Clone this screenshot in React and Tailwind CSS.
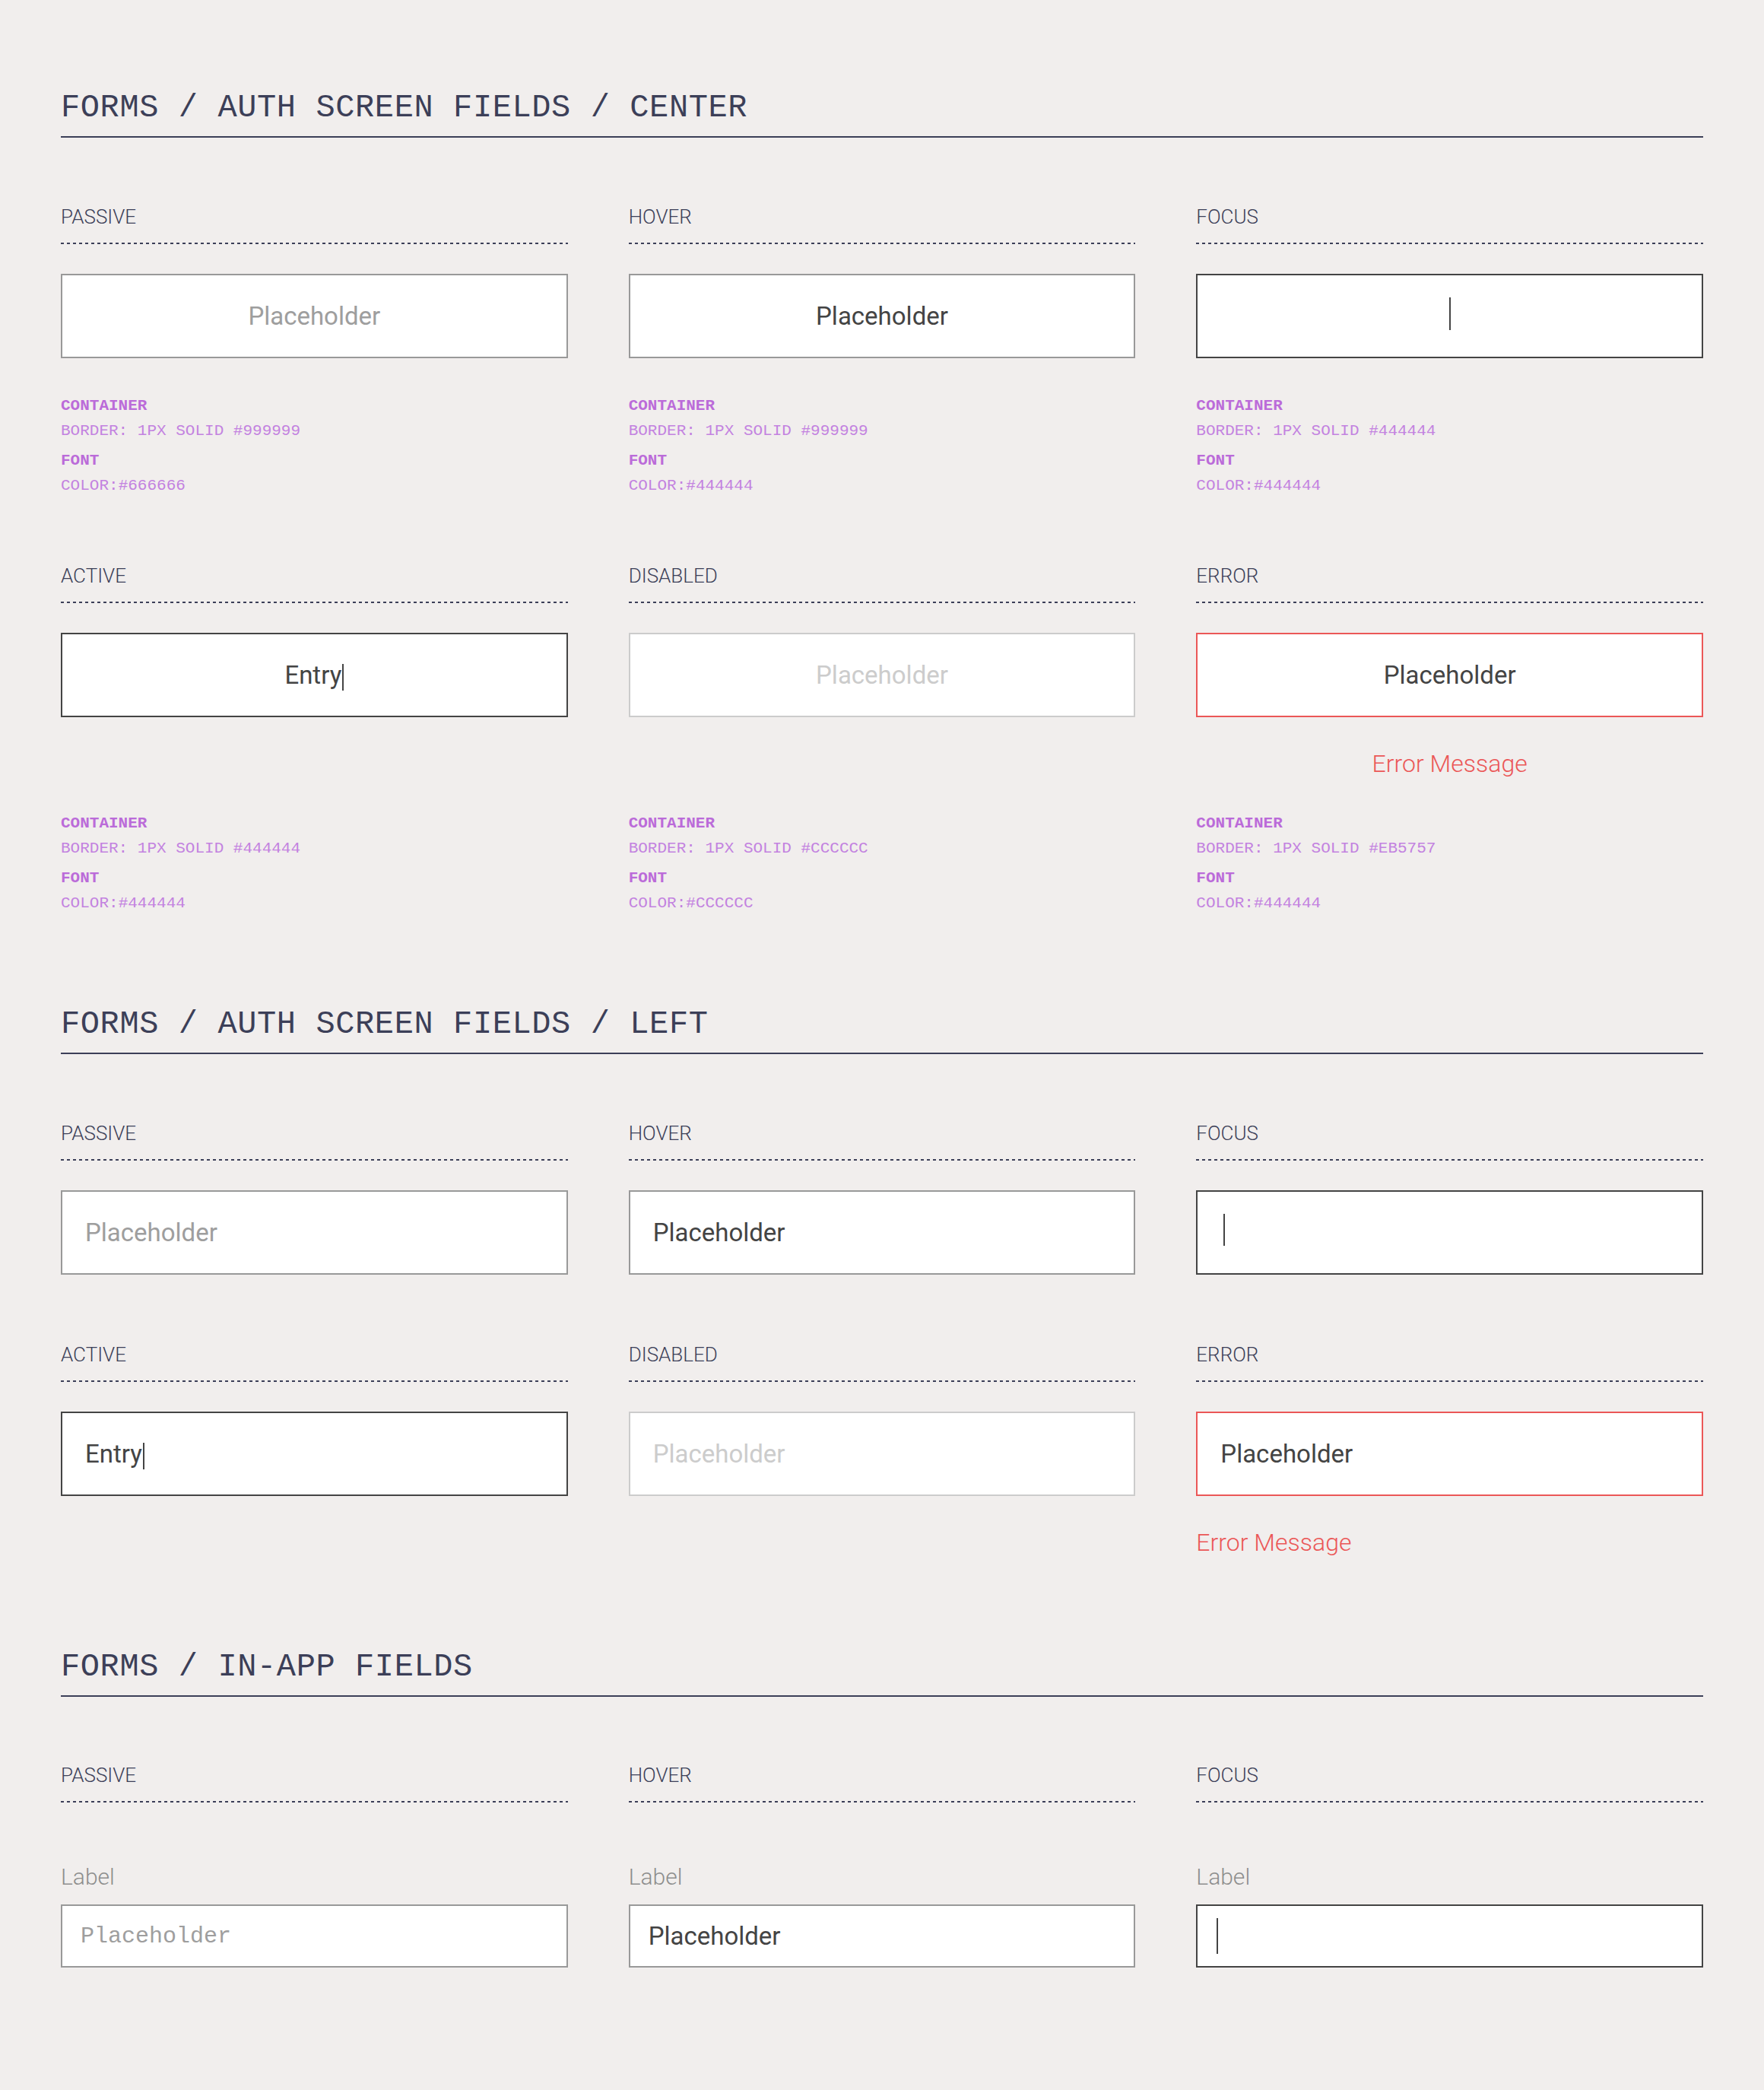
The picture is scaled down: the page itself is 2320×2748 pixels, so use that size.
const MONO = "font-['Liberation_Mono',monospace]";

const variants = {
  passive: { box: 'border-[#999999]', text: 'text-[#9e9e9e]', content: 'Placeholder' },
  hover: { box: 'border-[#999999]', text: 'text-[#444444]', content: 'Placeholder' },
  focus: { box: 'border-[#444444]', cursor: true },
  active: { box: 'border-[#444444]', text: 'text-[#444444]', content: 'Entry', cursor: true },
  disabled: { box: 'border-[#cccccc]', text: 'text-[#cccccc]', content: 'Placeholder' },
  error: { box: 'border-[#eb5757]', text: 'text-[#444444]', content: 'Placeholder' },
};

function SectionTitle({ children }) {
  return (
    <h2
      className={`${MONO} text-[42px] leading-[43px] tracking-[0.6px] text-[#3c3f58] pt-[3px] pb-[15px] border-b-2 border-[#3c3f58]`}
    >
      {children}
    </h2>
  );
}

function StateHeader({ label }) {
  return (
    <>
      <p className="text-[26px] leading-[26px] font-light text-[#3c3f58]">{label}</p>
      <div className="mt-[21px] h-[2px] w-full bg-[linear-gradient(to_right,#3c3f58_50%,transparent_50%)] bg-[length:8px_2px] bg-repeat-x" />
    </>
  );
}

function Cursor({ h }) {
  return <span className={`inline-block w-[2px] bg-[#444444] ${h}`} />;
}

function Specs({ border, font }) {
  return (
    <div className={`${MONO} mt-auto pt-[46px] text-[21px] leading-[33px]`}>
      <p className="font-bold text-[#bb6bd9]">CONTAINER</p>
      <p className="text-[#c382e0]">BORDER: 1PX SOLID {border}</p>
      <p className="mt-[6px] font-bold text-[#bb6bd9]">FONT</p>
      <p className="text-[#c382e0]">COLOR:{font}</p>
    </div>
  );
}

function AuthField({ state, align }) {
  const v = variants[state];
  const center = align === 'center';
  return (
    <div
      className={`mt-[39px] h-[111px] bg-white border-2 ${v.box} flex items-center ${
        center ? 'justify-center' : 'pl-[30px]'
      }`}
    >
      {state === 'focus' ? (
        <span className={center ? '' : 'pl-[4px]'}>
          <Cursor h={center ? 'h-[43px]' : 'h-[42px]'} />
        </span>
      ) : (
        <span className={`flex items-center text-[33px] leading-[33px] ${v.text}`}>
          {v.content}
          {v.cursor && (
            <span className="ml-[1px] mt-[6px] flex">
              <Cursor h="h-[35px]" />
            </span>
          )}
        </span>
      )}
    </div>
  );
}

function AuthCell({ label, state, align, specs }) {
  return (
    <div className="flex flex-col">
      <StateHeader label={label} />
      <AuthField state={state} align={align} />
      {state === 'error' && (
        <p
          className={`mt-[45px] text-[32px] leading-[32px] font-light text-[#eb5757] ${
            align === 'center' ? 'text-center' : ''
          }`}
        >
          Error Message
        </p>
      )}
      {specs && <Specs border={specs[0]} font={specs[1]} />}
    </div>
  );
}

const centerCells = [
  { label: 'PASSIVE', state: 'passive', specs: ['#999999', '#666666'] },
  { label: 'HOVER', state: 'hover', specs: ['#999999', '#444444'] },
  { label: 'FOCUS', state: 'focus', specs: ['#444444', '#444444'] },
  { label: 'ACTIVE', state: 'active', specs: ['#444444', '#444444'] },
  { label: 'DISABLED', state: 'disabled', specs: ['#CCCCCC', '#CCCCCC'] },
  { label: 'ERROR', state: 'error', specs: ['#EB5757', '#444444'] },
];

const leftCells = [
  { label: 'PASSIVE', state: 'passive' },
  { label: 'HOVER', state: 'hover' },
  { label: 'FOCUS', state: 'focus' },
  { label: 'ACTIVE', state: 'active' },
  { label: 'DISABLED', state: 'disabled' },
  { label: 'ERROR', state: 'error' },
];

function InAppCell({ label, state }) {
  const box = state === 'focus' ? 'border-[#444444]' : 'border-[#999999]';
  return (
    <div className="flex flex-col">
      <StateHeader label={label} />
      <p className="mt-[83px] text-[30px] leading-[30px] font-light text-[#8e8e8e]">Label</p>
      <div className={`mt-[21px] h-[83px] bg-white border-2 ${box} flex items-center pl-[24px]`}>
        {state === 'passive' && (
          <span className={`${MONO} text-[30px] leading-[30px] text-[#9e9e9e]`}>Placeholder</span>
        )}
        {state === 'hover' && (
          <span className="text-[33px] leading-[33px] text-[#444444]">Placeholder</span>
        )}
        {state === 'focus' && (
          <span className="pl-[1px] flex">
            <Cursor h="h-[47px]" />
          </span>
        )}
      </div>
    </div>
  );
}

export default function App() {
  return (
    <div className="min-h-[2748px] w-full bg-[#f1eeed] px-[80px] pt-[118px] font-['Roboto',sans-serif]">
      <section>
        <SectionTitle>FORMS / AUTH SCREEN FIELDS / CENTER</SectionTitle>
        <div className="mt-[91px] grid grid-cols-3 gap-x-[80px] gap-y-[89px]">
          {centerCells.map((c) => (
            <AuthCell key={c.label} {...c} align="center" />
          ))}
        </div>
      </section>

      <section className="mt-[119px]">
        <SectionTitle>FORMS / AUTH SCREEN FIELDS / LEFT</SectionTitle>
        <div className="mt-[91px] grid grid-cols-3 gap-x-[80px] gap-y-[92px]">
          {leftCells.map((c) => (
            <AuthCell key={c.label} {...c} align="left" />
          ))}
        </div>
      </section>

      <section className="mt-[124px]">
        <SectionTitle>FORMS / IN-APP FIELDS</SectionTitle>
        <div className="mt-[90px] grid grid-cols-3 gap-x-[80px]">
          <InAppCell label="PASSIVE" state="passive" />
          <InAppCell label="HOVER" state="hover" />
          <InAppCell label="FOCUS" state="focus" />
        </div>
      </section>
    </div>
  );
}
